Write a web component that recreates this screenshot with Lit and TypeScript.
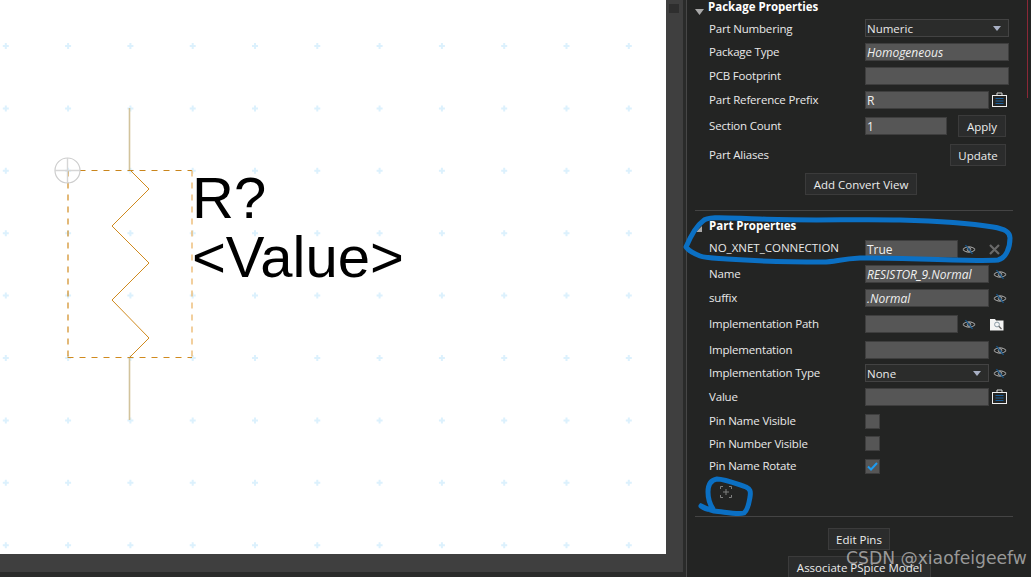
import { LitElement, html, css, svg } from "lit";
import { customElement } from "lit/decorators.js";

const eye = html`<svg class="eye" width="14" height="11" viewBox="0 0 16 12" fill="none">
  <path d="M1 6 C4 2 12 2 15 6 C12 10 4 10 1 6 Z" stroke="#bdbdbd" stroke-width="1.1"/>
  <circle cx="8" cy="6" r="2" stroke="#bdbdbd" stroke-width="1"/>
  <path d="M4 1 L12 11" stroke="#17598f" stroke-width="1.4"/>
</svg>`;

const clip = html`<svg class="clip" width="17" height="16" viewBox="0 0 17 16" fill="none">
  <path d="M6 3 V1 H11 V3" stroke="#d8d8d8" stroke-width="1"/>
  <rect x="1.5" y="3.5" width="14" height="11" stroke="#eeeeee" stroke-width="1"/>
  <path d="M4.5 6.5 H12.5 M4.5 9 H12.5 M4.5 11.5 H12.5" stroke="#1b5f9c" stroke-width="1.2"/>
</svg>`;

const cross = html`<svg class="x" width="11" height="11" viewBox="0 0 11 11" fill="none">
  <path d="M1 1 L10 10 M10 1 L1 10" stroke="#6a6a6a" stroke-width="2.2"/>
</svg>`;

const browse = html`<svg class="b" width="14" height="13" viewBox="0 0 14 13" fill="none">
  <path d="M0 1 H5 L6 2.5 H13.5 V12.5 H0 Z" fill="#f4f4f4"/>
  <circle cx="7" cy="6.5" r="2.4" stroke="#8a9aa5" stroke-width="1" fill="#f4f4f4"/>
  <path d="M8.8 8.3 L11.5 11" stroke="#666" stroke-width="1.3"/>
</svg>`;

const focus = html`<svg width="12" height="12" viewBox="0 0 12 12" fill="none" stroke="#808080" stroke-width="1">
  <path d="M.5 3 V.5 H3 M9 .5 H11.5 V3 M11.5 9 V11.5 H9 M3 11.5 H.5 V9 M6 3 V9 M3 6 H9"/>
</svg>`;

const xs: number[] = Array.from({ length: 11 }, (_, i) => 5.8 + 62.3 * i);
const ys: number[] = Array.from({ length: 9 }, (_, i) => 46 + 62.4 * i);

@customElement("app-root")
export class AppRoot extends LitElement {
  static styles = css`
    :host {
      display: flex;
      position: relative;
      width: 1031px;
      height: 577px;
      overflow: hidden;
      background: #232423;
      font-family: "Open Sans", "Noto Sans", sans-serif;
      font-size: 11.5px;
      color: #e9e9e9;
    }
    .left { width: 683px; height: 577px; flex: none; background: #2a2b2a; }
    .work { display: flex; height: 572px; background: #3f3f3f; }
    .canvas { width: 666px; height: 554px; background: #fff; flex: none; }
    .canvas svg { display: block; }
    .vbar { flex: 1; padding: 4px 4px 0 3px; }
    .thumb { height: 9px; width: 10px; background: #2e2e2e; }
    .gutter { width: 3px; flex: none; background: #2a2b2a; }
    .panel {
      flex: 1; border-left: 1px solid #474747; background: #232423;
      padding-left: 8px; display: flex; flex-direction: column; overflow: hidden;
    }
    .head { display: flex; align-items: flex-start; height: 13px; line-height: 13px; font-weight: 700; color: #fff; font-size: 11.5px; }
    .caret { width: 9px; height: 6px; margin: 9px 4px 0 0; background: #a9a9a9; clip-path: polygon(0 0, 100% 0, 50% 100%); flex: none; }
    .caret.closed { width: 6px; margin: 7px 7px 0 1px; clip-path: polygon(100% 0, 100% 100%, 0 100%); }
    .row { display: flex; align-items: center; height: 18px; padding-left: 14px; flex: none; }
    .row.tall { height: 22px; }
    .row.chk { height: 15px; }
    .label { width: 156px; flex: none; white-space: nowrap; letter-spacing: -0.18px; padding-bottom: 2px; }
    .label.low { padding-bottom: 0; }
    .label.mid { padding-bottom: 1px; }
    .label.wide { letter-spacing: 0; padding-bottom: 3px; }
    .inp {
      box-sizing: border-box; height: 18px; background: #565656; border: 1px solid #3e3e3e;
      padding: 0 2px 0 1px; line-height: 17px; color: #f0f0f0; font-size: 12px; white-space: nowrap; overflow: hidden;
    }
    .w144 { width: 144px; } .w124 { width: 124px; } .w93 { width: 93px; } .w82 { width: 82px; }
    .it { font-style: italic; }
    .sel {
      box-sizing: border-box; height: 18px; background: #2b2c2b; border: 1px solid #434343;
      padding: 1px 2px 0 1px; line-height: 16px; display: flex; align-items: center; justify-content: space-between;
    }
    .tri { width: 8px; height: 5px; margin-right: 5px; background: #a8b0c4; clip-path: polygon(0 0, 100% 0, 50% 100%); }
    .eye { margin-left: 4px; flex: none; }
    .x { margin-left: 13px; flex: none; }
    .b { margin-left: 14px; flex: none; }
    .clip { margin-left: 2px; flex: none; }
    .btn {
      box-sizing: border-box; height: 22px; background: #2b2c2c; border: 1px solid #3b3b3b;
      display: flex; align-items: center; justify-content: center; color: #ececec; white-space: nowrap; flex: none;
    }
    .apply { width: 48px; margin-left: 11px; }
    .update { width: 56px; margin-left: 85px; }
    .center { justify-content: flex-start; padding-left: 0; }
    .add { width: 112px; margin-left: 110px; }
    .edit { width: 62px; margin-left: 133px; }
    .assoc { width: 143px; margin-left: 93px; }
    .box { box-sizing: border-box; width: 15px; height: 15px; background: #565656; border: 1px solid #3e3e3e; display: flex; align-items: center; justify-content: center; }
    .rule { height: 1px; width: 318px; background: #444; flex: none; }
    .icon { height: 12px; padding-left: 25px; flex: none; display: flex; }
    .g5 { margin-top: 5px; } .g6 { margin-top: 6px; } .g7 { margin-top: 7px; } .g8 { margin-top: 8px; }
    .g11 { margin-top: 11px; } .g12 { margin-top: 12px; } .g15 { margin-top: 15px; } .g18 { margin-top: 18px; }
    .ink { position: absolute; left: 0; top: 0; pointer-events: none; }
    .mark {
      position: absolute; left: 846px; top: 547px; font-family: "DejaVu Sans", sans-serif; font-size: 17.2px; line-height: 22px;
      color: rgba(205, 205, 205, 0.7); white-space: nowrap;
    }
    .edge { position: absolute; left: 1027px; top: 0; width: 1px; height: 98px; background: #8a2836; }
    text.big { font-family: "Liberation Sans", Arial, sans-serif; font-size: 58px; fill: #000; }
  `;

  private canvasSvg() {
    return html`<svg width="666" height="554" viewBox="0 0 666 554">
      ${xs.map((x) =>
        ys.map(
          (y) => svg`<path d="M${x - 3} ${y} H${x + 3} M${x} ${y - 3} V${y + 3}" stroke="#dcf1fd" stroke-width="2"/>`
        )
      )}
      <path d="M129.5 108 V170 M129.5 357 V420" stroke="#d2c39c" stroke-width="1.6"/>
      <path d="M67.5 170.5 H192" fill="none" stroke="#c9851c" stroke-dasharray="6 6"/>
      <path d="M68 170.5 V357.5" fill="none" stroke="#d08a1e" stroke-width="1.2" stroke-dasharray="6 6"/>
      <path d="M67.5 357.5 H192" fill="none" stroke="#d08a1e" stroke-dasharray="6 6"/>
      <path d="M192 170.5 V357.5" fill="none" stroke="#edbb74" stroke-width="1.4" stroke-dasharray="6 6"/>
      <path d="M130 170 L149 189 L112 226 L149 263 L112 300 L149 338 L130 357" fill="none" stroke="#d08a1e" stroke-width="1"/>
      <circle cx="67.5" cy="170.5" r="12.5" fill="none" stroke="#cdcdcd" stroke-width="1.2"/>
      <path d="M55 170.5 H80 M67.5 158 V183" stroke="#d6d6d6" stroke-width="1.4"/>
      <text class="big" x="192" y="218">R?</text>
      <text class="big" x="192" y="277">&lt;Value&gt;</text>
    </svg>`;
  }

  render() {
    return html`
      <div class="left">
        <div class="work">
          <div class="canvas">${this.canvasSvg()}</div>
          <div class="vbar"><div class="thumb"></div></div>
        </div>
      </div>
      <div class="gutter"></div>
      <div class="panel">
        <div class="head"><span class="caret"></span>Package Properties</div>
        <div class="row g6"><span class="label low">Part Numbering</span><div class="sel w144">Numeric<span class="tri"></span></div></div>
        <div class="row g6"><span class="label">Package Type</span><div class="inp w144 it">Homogeneous</div></div>
        <div class="row g6"><span class="label">PCB Footprint</span><div class="inp w144"></div></div>
        <div class="row g6"><span class="label">Part Reference Prefix</span><div class="inp w124">R</div>${clip}</div>
        <div class="row tall g6"><span class="label">Section Count</span><div class="inp w82">1</div><div class="btn apply">Apply</div></div>
        <div class="row tall g7"><span class="label">Part Aliases</span><div class="btn update">Update</div></div>
        <div class="row tall g7 center"><div class="btn add">Add Convert View</div></div>
        <div class="rule g15"></div>
        <div class="head g8"><span class="caret closed"></span>Part Properties</div>
        <div class="row g8"><span class="label wide">NO_XNET_CONNECTION</span><div class="inp w93">True</div>${eye}${cross}</div>
        <div class="row g7"><span class="label mid">Name</span><div class="inp w124 it">RESISTOR_9.Normal</div>${eye}</div>
        <div class="row g6"><span class="label mid">suffix</span><div class="inp w124 it">.Normal</div>${eye}</div>
        <div class="row g8"><span class="label mid">Implementation Path</span><div class="inp w93"></div>${eye}${browse}</div>
        <div class="row g8"><span class="label mid">Implementation</span><div class="inp w124"></div>${eye}</div>
        <div class="row g5"><span class="label mid">Implementation Type</span><div class="sel w124">None<span class="tri"></span></div>${eye}</div>
        <div class="row g6"><span class="label mid">Value</span><div class="inp w124"></div>${clip}</div>
        <div class="row chk g8"><span class="label">Pin Name Visible</span><div class="box"></div></div>
        <div class="row chk g7"><span class="label mid">Pin Number Visible</span><div class="box"></div></div>
        <div class="row chk g8"><span class="label">Pin Name Rotate</span><div class="box">
          <svg width="11" height="9" viewBox="0 0 11 9" fill="none"><path d="M1 4.5 L4 7.5 L10 1" stroke="#1e9bf0" stroke-width="2"/></svg>
        </div></div>
        <div class="icon g12">${focus}</div>
        <div class="rule g18"></div>
        <div class="row tall g11 center"><div class="btn edit">Edit Pins</div></div>
        <div class="row tall g6 center"><div class="btn assoc">Associate PSpice Model</div></div>
      </div>
      <div class="edge"></div>
      <svg class="ink" width="1031" height="577" viewBox="0 0 1031 577" fill="none" stroke="#0b70c4" stroke-width="5" stroke-linecap="round" stroke-linejoin="round">
        <path d="M686 247 C689 240 696 226 703 221 C708 216 725 218 760 219 C800 221 860 219 900 220 C940 221 975 224 993 227 C1005 229 1010 232 1010 238 C1010 248 1006 258 998 260 C970 262 900 257 860 258 C840 259 835 262 823 262 C790 262 755 261 727 259 C712 258 705 258 700 256 C695 254 689 251 686 247 Z"/>
        <path d="M701 506 C705 509 709 510 713 509 C709 503 708 497 708 492 C708 484 711 480 717 479 C725 479 737 484 746 487 C750 489 751 491 750 497 C749 503 748 510 744 513 C738 515 725 512 714 511 C710 510 706 509 701 506"/>
      </svg>
      <div class="mark">CSDN @xiaofeigeefw</div>
    `;
  }
}
